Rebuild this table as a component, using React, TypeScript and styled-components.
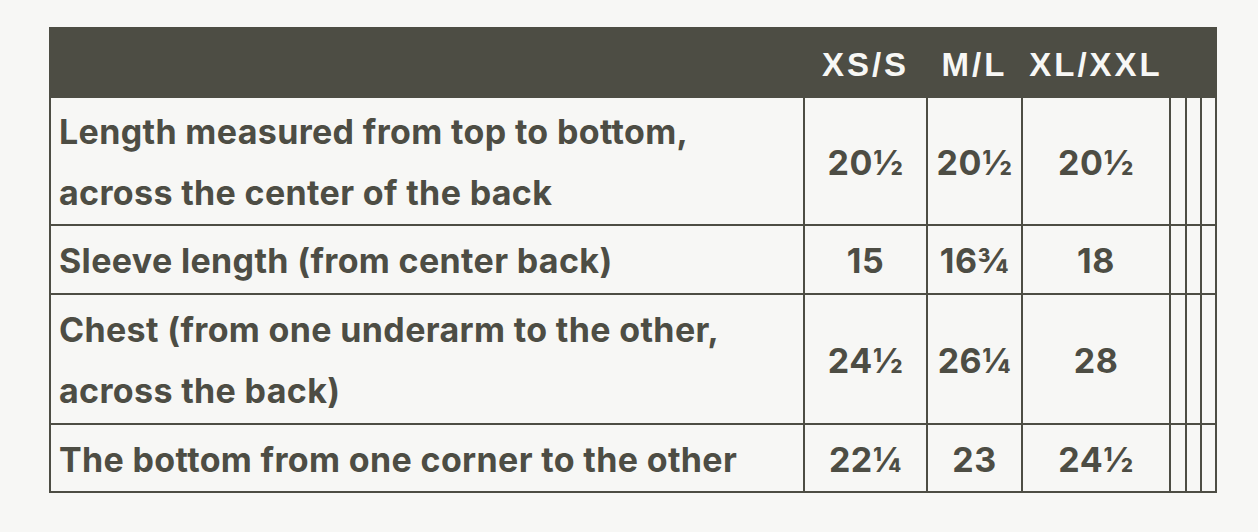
import React from "react";
import styled, { createGlobalStyle } from "styled-components";

const ink = "#4d4d44";
const paper = "#f7f7f5";

const Global = createGlobalStyle`
  html, body { margin: 0; padding: 0; background: ${paper}; }
  body { font-family: Inter, "Liberation Sans", sans-serif; }
`;

const Page = styled.div`
  padding: 27px 0 0 49px;
`;

const Table = styled.table`
  border-collapse: collapse;
  table-layout: fixed;
  width: 1166px;
  color: ${ink};
`;

const HeadRow = styled.tr`
  background: ${ink};
  height: 69px;
`;

const HeadCell = styled.th`
  padding: 0;
  border: 2px solid ${ink};
  font-family: "Liberation Sans", Arial, sans-serif;
  font-weight: 700;
  font-size: 33px;
  letter-spacing: 3px;
  color: ${paper};
  text-align: center;
  vertical-align: middle;
  padding-top: 4px;
  white-space: nowrap;
`;

const Row = styled.tr<{ $h: number }>`
  height: ${(p) => p.$h}px;
`;

const Label = styled.td`
  border: 2px solid ${ink};
  padding: 3px 8px 1px;
  font-weight: 700;
  font-size: 34px;
  letter-spacing: 0.35px;
  line-height: 61px;
  text-align: left;
  vertical-align: middle;
  white-space: nowrap;
`;

const Value = styled.td`
  border: 2px solid ${ink};
  padding: 2px 0 0;
  font-weight: 700;
  font-size: 34px;
  letter-spacing: 0.5px;
  text-align: center;
  vertical-align: middle;
  white-space: nowrap;
`;

const Empty = styled.td`
  border: 2px solid ${ink};
  padding: 0;
`;

const rows: { label: React.ReactNode; h: number; v: string[] }[] = [
  {
    label: (
      <>
        Length measured from top to bottom,
        <br />
        across the center of the back
      </>
    ),
    h: 128,
    v: ["20½", "20½", "20½"],
  },
  { label: "Sleeve length (from center back)", h: 69, v: ["15", "16¾", "18"] },
  {
    label: (
      <>
        Chest (from one underarm to the other,
        <br />
        across the back)
      </>
    ),
    h: 130,
    v: ["24½", "26¼", "28"],
  },
  { label: "The bottom from one corner to the other", h: 68, v: ["22¼", "23", "24½"] },
];

export default function App() {
  return (
    <>
      <Global />
      <Page>
        <Table>
          <colgroup>
            <col style={{ width: 754 }} />
            <col style={{ width: 123 }} />
            <col style={{ width: 95 }} />
            <col style={{ width: 148 }} />
            <col style={{ width: 16 }} />
            <col style={{ width: 15 }} />
            <col style={{ width: 15 }} />
          </colgroup>
          <thead>
            <HeadRow>
              <HeadCell />
              <HeadCell>XS/S</HeadCell>
              <HeadCell>M/L</HeadCell>
              <HeadCell>XL/XXL</HeadCell>
              <HeadCell />
              <HeadCell />
              <HeadCell />
            </HeadRow>
          </thead>
          <tbody>
            {rows.map((r, i) => (
              <Row key={i} $h={r.h}>
                <Label>{r.label}</Label>
                {r.v.map((v, j) => (
                  <Value key={j}>{v}</Value>
                ))}
                <Empty />
                <Empty />
                <Empty />
              </Row>
            ))}
          </tbody>
        </Table>
      </Page>
    </>
  );
}
